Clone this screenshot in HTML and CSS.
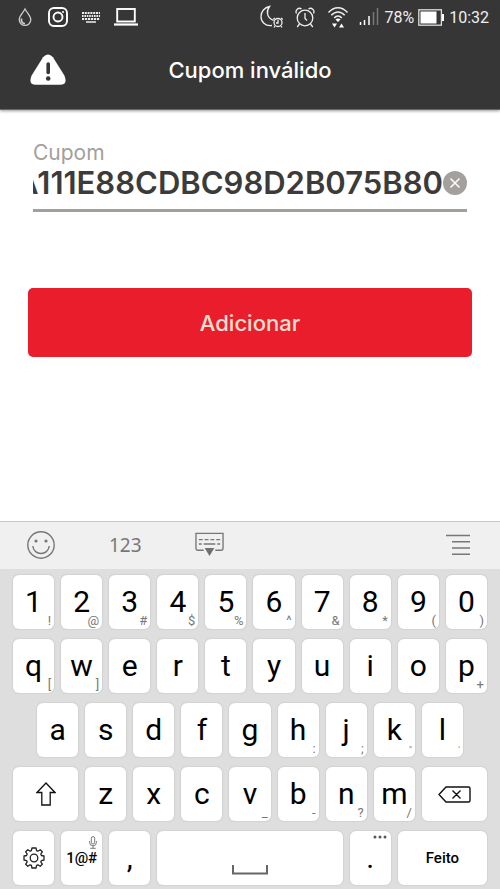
FILE: index.html
```html
<!DOCTYPE html>
<html lang="pt-BR">
<head>
<meta charset="utf-8">
<meta name="viewport" content="width=device-width, initial-scale=1">
<title>Cupom</title>
<link rel="stylesheet" href="styles.css">
</head>
<body>
<header class="top">
  <div class="status">
    <div class="status-left">
      <svg width="14" height="20" viewBox="0 0 14 20" fill="none" stroke="#ccc" stroke-width="1.3"><path d="M7 2C5 6 1.200 9 1.200 12.600a5.800 5.800 0 0 0 11.600 0C12.800 9 9 6 7 2z"/><path d="M3.500 11.500c-.5 3 1 5 3.500 5.200" stroke-width="1.800"/></svg>
      <svg width="20" height="20" viewBox="0 0 20 20" fill="none" stroke="#fff" stroke-width="1.900"><rect x="1" y="1" width="18" height="18" rx="5"/><circle cx="10" cy="10" r="4.500"/><circle cx="15" cy="5" r="1" fill="#fff" stroke="none"/></svg>
      <svg width="20" height="12" viewBox="0 0 20 12" fill="none" stroke="#eee" stroke-width="2.200"><path d="M1 2h18" stroke-dasharray="2 .8"/><path d="M1 5h18" stroke-dasharray="1.600 .8"/><path d="M1 8h18" stroke-dasharray="2.200 .8"/><path d="M5 11h10" stroke-width="1.500"/></svg>
      <svg width="24" height="18" viewBox="0 0 24 18" fill="none" stroke="#fff"><rect x="3.200" y="1" width="17.600" height="12.500" stroke-width="1.900"/><path d="M0 16.500h24" stroke-width="2.200"/></svg>
    </div>
    <div class="status-right">
      <svg class="moon" width="24" height="24" viewBox="0 0 24 24" fill="none" stroke="#eee" stroke-width="1.300"><path d="M12 20.500C5 21.500 1 16.500 1 11.500 1 6.500 4.500 2.500 9.500 1.500c-3.500 4.500-3 11 4 14"/><circle cx="18" cy="17.500" r="4"/><path d="M18 15v3h-2M13.300 14.500l1.600-1.500M22.700 14.500L21.100 13M15 21l-1 1.500M21 21l1 1.500"/></svg>
      <svg class="alarm" width="20" height="21" viewBox="0 0 20 21" fill="none" stroke="#eee" stroke-width="1.300"><circle cx="10" cy="11" r="7.800"/><path d="M10 6v5.500l2 2M1.500 6.500C-.2 3.500 3.500-.2 6.500 2M18.500 6.500c1.700-3-2-6.700-5-4.500M4.500 17l-2.300 3M15.500 17l2.300 3"/></svg>
      <svg class="wifi" width="22" height="22" viewBox="0 0 22 22" fill="none" stroke="#eee" stroke-width="1.500"><path d="M1.500 6.500c5.500-6.500 13.500-6.500 19 0M4.300 9.300c4-4.500 9.400-4.500 13.400 0M7.200 12c2.200-2.600 5.400-2.600 7.600 0"/><path d="M11 16l-2.500-2.500q2.500-1.800 5 0zM5 17.500h5L7.500 21.500zM12 21.500h5l-2.500-4z" fill="#fff" stroke="none"/></svg>
      <svg class="signal" width="20" height="18" viewBox="0 0 20 18" fill="none" stroke-width="1.500"><path d="M1.500 17v-3M5.500 17v-5M10 17V8" stroke="#fff"/><path d="M14.500 17V4M18.500 17V0" stroke="#777"/></svg>
      <span class="percent">78%</span>
      <svg class="battery" width="26" height="17" viewBox="0 0 26 17"><rect x=".8" y=".8" width="22.600" height="15.400" fill="none" stroke="#ddd" stroke-width="1.300"/><path d="M2.500 2.500h16v12h-16zM24 5h2v7h-2z" fill="#fff"/></svg>
      <span class="time">10:32</span>
    </div>
  </div>
  <div class="alert" role="alert">
    <svg width="36" height="32" viewBox="0 0 36 32"><path d="M13 3.200q5-5.600 10 0l11.500 18.600q3.500 9-4.500 9H6q-8 0-4.500-9z" fill="#fff"/><path d="M18.200 10v8.500" stroke="#363636" stroke-width="3.600" stroke-linecap="round"/><circle cx="18.200" cy="24.500" r="2.300" fill="#363636"/></svg>
    <h1>Cupom inválido</h1>
  </div>
</header>
<main>
  <form>
    <div class="field">
      <label for="coupon">Cupom</label>
      <div class="entry">
        <input id="coupon" type="text" value="A111E88CDBC98D2B075B80" autocomplete="off">
        <button class="clear" type="button" aria-label="Limpar"><svg width="24" height="24" viewBox="0 0 24 24"><circle cx="12" cy="12" r="12" fill="#a3a09e"/><path d="M7.500 7.500l9 9M16.500 7.500l-9 9" stroke="#fff" stroke-width="1.500"/></svg></button>
      </div>
    </div>
    <button class="add" type="button">Adicionar</button>
  </form>
</main>
<section class="keyboard" aria-label="Teclado">
  <div class="tools">
    <button type="button" aria-label="Emojis"><svg width="28" height="28" viewBox="0 0 28 28" fill="none" stroke="#777" stroke-width="1.400"><circle cx="14" cy="14" r="13.200"/><path d="M5.800 15c.8 10 15.600 10 16.400 0"/><circle cx="9" cy="10" r="1.600" fill="#777" stroke="none"/><circle cx="19" cy="10" r="1.600" fill="#777" stroke="none"/></svg></button>
    <button class="numeric" type="button">123</button>
    <button class="hide" type="button" aria-label="Ocultar teclado"><svg width="29" height="25" viewBox="0 0 30 25" fill="none" stroke="#777" stroke-width="1.400"><path d="M9 18.500H3q-2 0-2-2V1h28v15.500q0 2-2 2h-6"/><path d="M4 7.500h22" stroke-dasharray="4 2"/><path d="M4 12h3M9 12h12M23 12h3"/><path d="M10 16h10l-5 8.500z" fill="#707070" stroke="none"/></svg></button>
    <button class="menu" type="button" aria-label="Menu"><svg width="24" height="22" viewBox="0 0 24 22" stroke="#777" stroke-width="1.400"><path d="M0 1.500h24M6 7.800h18M6 14h18M6 20.300h18"/></svg></button>
  </div>
  <div class="keys">
    <button type="button">1<small>!</small></button>
    <button type="button">2<small>@</small></button>
    <button type="button">3<small>#</small></button>
    <button type="button">4<small>$</small></button>
    <button type="button">5<small>%</small></button>
    <button type="button">6<small>^</small></button>
    <button type="button">7<small>&amp;</small></button>
    <button type="button">8<small>*</small></button>
    <button type="button">9<small>(</small></button>
    <button type="button">0<small>)</small></button>

    <button type="button">q<small>[</small></button>
    <button type="button">w<small>]</small></button>
    <button type="button">e</button>
    <button type="button">r</button>
    <button type="button">t</button>
    <button type="button">y</button>
    <button type="button">u</button>
    <button type="button">i</button>
    <button type="button">o</button>
    <button type="button">p<small>+</small></button>

    <button class="indent" type="button">a</button>
    <button type="button">s</button>
    <button type="button">d</button>
    <button type="button">f</button>
    <button type="button">g</button>
    <button type="button">h<small>:</small></button>
    <button type="button">j<small>;</small></button>
    <button type="button">k<small class="quote">"</small></button>
    <button type="button">l<small class="quote">'</small></button>

    <button class="wide row-start" type="button" aria-label="Maiúsculas"><svg width="20" height="24" viewBox="0 0 20 24" fill="none" stroke="#111" stroke-width="1.300"><path d="M10 1L1 10.500h4.800V23h8.400V10.500H19z"/></svg></button>
    <button type="button">z</button>
    <button type="button">x</button>
    <button type="button">c</button>
    <button type="button">v<small>_</small></button>
    <button type="button">b<small>-</small></button>
    <button type="button">n<small>?</small></button>
    <button type="button">m<small>/</small></button>
    <button class="wide" type="button" aria-label="Apagar"><svg width="33" height="17" viewBox="0 0 33 17" fill="none" stroke="#111" stroke-width="1.400"><path d="M1 8.500L8 1h22.500q1.500 0 1.500 1.500v12q0 1.500-1.500 1.500H8zM14.500 4.500l8 8M22.500 4.500l-8 8"/></svg></button>

    <button type="button" aria-label="Configurações"><svg width="22" height="22" viewBox="0 0 22 22" fill="none" stroke="#222" stroke-width="1.300" stroke-linejoin="round"><circle cx="11" cy="11" r="3.800"/><path d="M9 1h4l.6 2.700 1.300.5 2.300-1.500 2.100 2.100-1.500 2.300.6 1.400L21 9v4l-2.600.6-.6 1.300 1.500 2.300-2.100 2.100-2.300-1.500-1.300.5L13 21H9l-.6-2.700-1.300-.5-2.300 1.500-2.100-2.100 1.500-2.300-.6-1.300L1 13V9l2.600-.5.6-1.400-1.500-2.300 2.100-2.100 2.300 1.500 1.300-.5z"/></svg></button>
    <button class="word symbols" type="button">1@#<svg class="mic" width="8" height="13" viewBox="0 0 8 13" fill="none" stroke="#777"><rect x="2.300" y=".6" width="3.400" height="7.400" rx="1.700"/><path d="M.6 5v1.500q0 3.300 3.400 3.300t3.400-3.300V5M4 10v2M1.300 12.300h5.400"/></svg></button>
    <button type="button">,</button>
    <button class="space" type="button" aria-label="Espaço"><svg width="36" height="10" viewBox="0 0 36 10" fill="none" stroke="#666" stroke-width="2"><path d="M1 0v8.500h34V0"/></svg></button>
    <button type="button">.<svg class="dots" width="14" height="4" viewBox="0 0 14 4" fill="#555"><circle cx="2" cy="2" r="1.500"/><circle cx="7" cy="2" r="1.500"/><circle cx="12" cy="2" r="1.500"/></svg></button>
    <button class="word done" type="button">Feito</button>
  </div>
</section>
</body>
</html>
```
FILE: styles.css
```css
* {
  box-sizing: border-box;
}

body {
  margin: 0;
  min-height: 100vh;
  display: flex;
  flex-direction: column;
  background: #fff;
  font-family: Inter, "Liberation Sans", sans-serif;
}

button {
  border: 0;
  padding: 0;
  background: none;
  color: inherit;
  font: inherit;
}

svg {
  display: block;
  flex: none;
}

.top {
  background: #363636;
  color: #fff;
  border-bottom: 1px solid #666;
  box-shadow: 0 1px 3px rgba(0, 0, 0, 0.4);
}

.status {
  height: 34px;
  padding: 0 11px 0 18px;
  display: flex;
  align-items: center;
  justify-content: space-between;
  color: #eee;
  font-family: Roboto, sans-serif;
  font-size: 16px;
}

.status-left {
  display: flex;
  align-items: center;
  gap: 13px;
}

.status-left svg:first-child {
  margin-right: 3px;
}

.status-right {
  display: flex;
  align-items: center;
}

.moon {
  margin-right: 11px;
}

.alarm {
  margin-right: 12px;
}

.wifi {
  margin-right: 10px;
}

.signal {
  margin-right: 5px;
}

.percent {
  margin-right: 4px;
}

.battery {
  margin-right: 5px;
}

.alert {
  height: 75px;
  padding: 0 30px 3px;
  display: grid;
  grid-template-columns: 36px 1fr 36px;
  align-items: center;
}

h1 {
  margin: 0;
  font-size: 22px;
  font-weight: 500;
  line-height: 28px;
  text-align: center;
}

main {
  flex: 1;
  padding: 30px 28px;
}

.field {
  margin: 0 5px 76px;
  border-bottom: 3px solid #a3a09c;
}

label {
  display: block;
  color: #a3a09c;
  font-size: 21px;
  line-height: 26px;
}

.entry {
  display: flex;
  align-items: center;
  height: 43px;
  padding-bottom: 9px;
}

input {
  flex: 1;
  min-width: 0;
  height: 32px;
  padding: 0;
  border: 0;
  outline: 0;
  background: none;
  color: #3b3b3b;
  direction: rtl;
  font: 600 31px/32px Inter, "Liberation Sans", sans-serif;
}

.add {
  display: block;
  width: 100%;
  height: 69px;
  border-radius: 5px;
  background: #ea1d2c;
  color: #fbe0d2;
  font-size: 22px;
  font-weight: 500;
}

.keyboard {
  background: #dedede;
  color: #000;
  font-family: Roboto, sans-serif;
}

.tools {
  height: 48px;
  padding: 0 30px 2px 27px;
  display: flex;
  align-items: center;
  border-top: 1px solid #c8c8c8;
  background: #f0f0f0;
  color: #777;
}

.numeric {
  margin: 0 53px 0 54px;
  font-family: "Noto Sans", sans-serif;
  font-size: 19px;
  line-height: 24px;
}

.menu {
  margin-left: auto;
}

.keys {
  padding: 6px 13px 4px;
  display: grid;
  grid-template-columns: repeat(20, 1fr);
  grid-auto-rows: 54px;
  gap: 10px 7px;
}

.keys button {
  position: relative;
  grid-column-end: span 2;
  display: flex;
  align-items: center;
  justify-content: center;
  min-width: 0;
  border-radius: 6px;
  background: #fff;
  box-shadow: 0 0 1px 1px #d2d2d2;
  font-size: 30px;
  line-height: 54px;
}

.keys .indent {
  grid-column-start: 2;
}

.keys .wide {
  grid-column-end: span 3;
}

.keys .row-start {
  grid-column-start: 1;
}

.keys .space {
  grid-column-end: span 8;
  align-items: flex-end;
  padding-bottom: 10px;
}

.keys .done {
  grid-column-end: span 4;
}

.keys .word {
  font-size: 15px;
  font-weight: 500;
}

small {
  position: absolute;
  right: 3px;
  bottom: 1px;
  color: #777;
  font-size: 13px;
  line-height: 14px;
}

.quote {
  bottom: 0;
  font-size: 9px;
}

.mic {
  position: absolute;
  top: 5px;
  right: 5px;
}

.dots {
  position: absolute;
  top: 4px;
  right: 4px;
}
```
